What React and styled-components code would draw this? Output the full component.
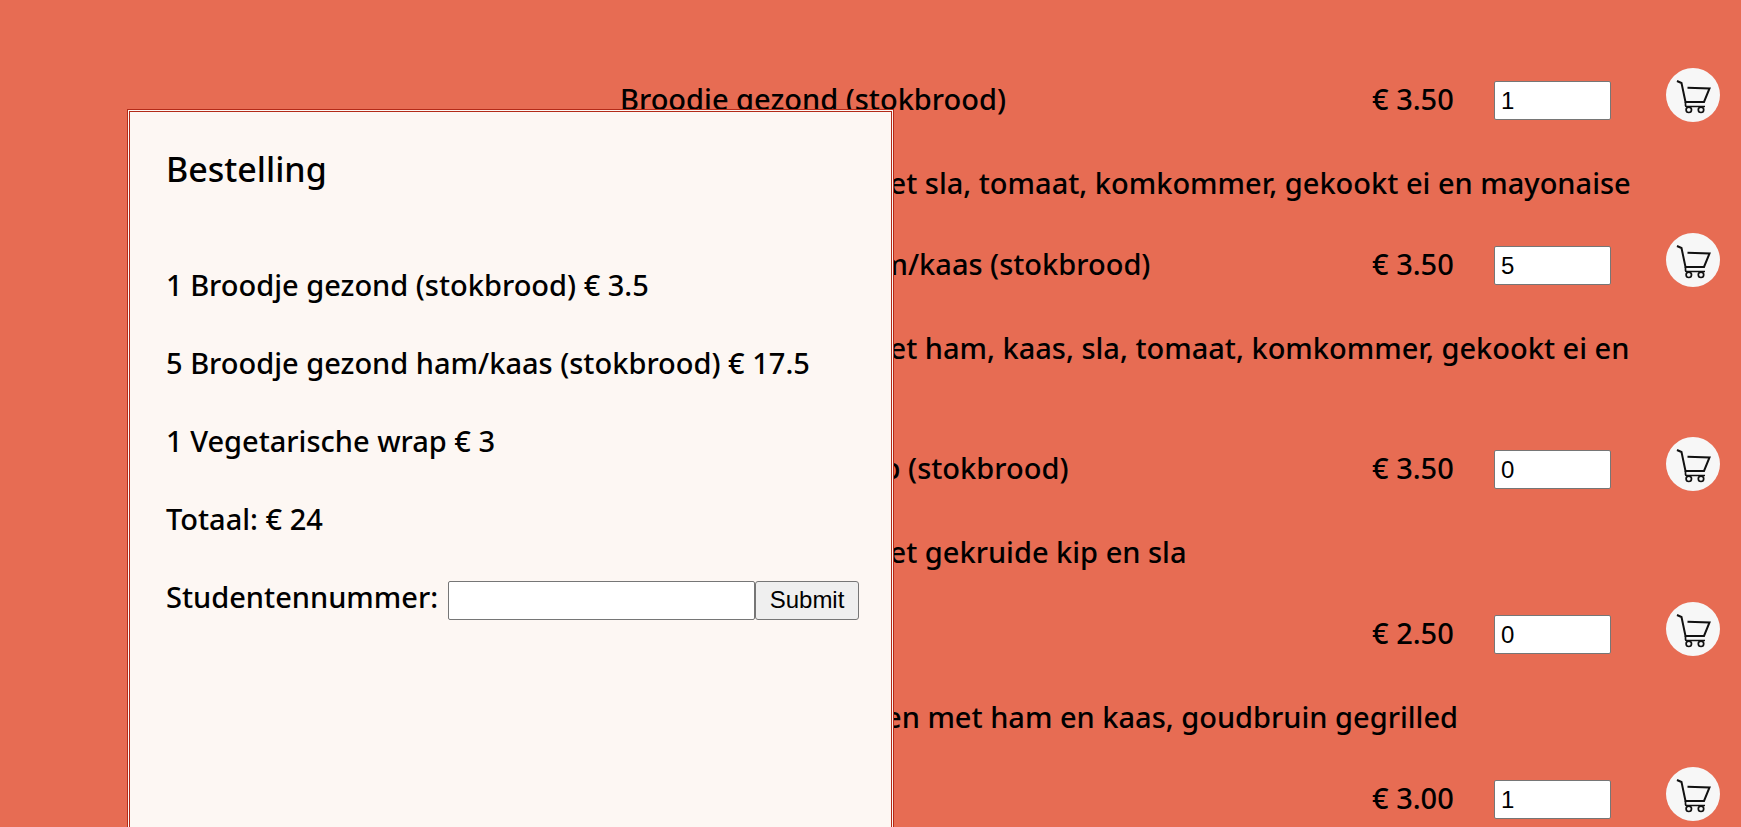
import React from "react";
import styled, { createGlobalStyle } from "styled-components";

const GlobalStyle = createGlobalStyle`
  * { box-sizing: border-box; }
  html { scrollbar-width: none; }
  body {
    margin: 0;
    background: #e76c53;
    color: #000;
    font: 500 29px/38px "Noto Sans", "Open Sans", sans-serif;
  }
`;

const Menu = styled.main`
  display: flex;
  flex-direction: column;
  gap: 31px;
  padding: 68px 21px 0 620px;
`;

const Item = styled.section`
  display: flex;
  flex-direction: column;
  gap: 41px;
`;

const ItemRow = styled.div`
  display: grid;
  grid-template-columns: 1fr 122px 172px 54px;
  align-items: start;
`;

const ItemName = styled.h2`
  margin: 12px 0 0;
  font-size: inherit;
  font-weight: inherit;
  white-space: nowrap;
`;

const Price = styled.span`
  margin-top: 12px;
`;

const Field = styled.input`
  height: 39px;
  padding: 1px 6px;
  border: 1px solid #767676;
  border-radius: 2px;
  background: #fff;
  color: #000;
  font: 24px "Liberation Sans", Arial, sans-serif;
`;

const Quantity = styled(Field)`
  width: 117px;
  margin-top: 13px;
  appearance: textfield;
  &::-webkit-inner-spin-button { display: none; }
`;

const CartButton = styled.button`
  width: 54px;
  height: 54px;
  padding: 0;
  border: 0;
  border-radius: 50%;
  background: #f7f7f7;
  cursor: pointer;
  svg { display: block; }
`;

const Description = styled.p`
  margin: 0 54px 0 0;
  line-height: 39px;
`;

const Dialog = styled.div`
  position: fixed;
  top: 109px;
  bottom: 0;
  left: 127px;
  width: calc(44% + 1px);
  padding: 35px 32px 36px 36px;
  border: 3px double #b32a18;
  border-bottom: 0;
  background: #fdf7f3;
`;

const Title = styled.h1`
  margin: 0 0 75px;
  font-size: 34px;
  line-height: 44px;
  font-weight: 500;
`;

const Line = styled.p`
  margin: 0 0 40px;
  white-space: nowrap;
`;

const Form = styled.form`
  display: flex;
  align-items: baseline;
`;

const StudentInput = styled(Field)`
  flex: 1;
  min-width: 0;
  margin-left: 10px;
`;

const Submit = styled.button`
  width: 104px;
  height: 39px;
  padding: 0;
  border: 1px solid #767676;
  border-radius: 3px;
  background: #efefef;
  color: #000;
  font: 24px "Liberation Sans", Arial, sans-serif;
`;

const CartIcon = () => (
  <svg width="54" height="54" viewBox="0 0 54 54" fill="none" stroke="#111" strokeWidth="1.7" aria-hidden="true">
    <path d="M11 13 15.5 15 19.5 34H38L43.5 20.5 21.5 19.7" strokeWidth="2" />
    <path d="M19.5 34V37.5Q19.5 38.5 21 38.5H39" />
    <circle cx="22.8" cy="41.8" r="2.7" />
    <circle cx="35" cy="41.8" r="2.7" />
  </svg>
);

const items = [
  { name: "Broodje gezond (stokbrood)", price: "3.50", count: 1, text: "Vers stokbroodje met sla, tomaat, komkommer, gekookt ei en mayonaise" },
  { name: "Broodje gezond ham/kaas (stokbrood)", price: "3.50", count: 5, text: "Vers stokbroodje met ham, kaas, sla, tomaat, komkommer, gekookt ei en mayonaise" },
  { name: "Broodje kruidige kip (stokbrood)", price: "3.50", count: 0, text: "Vers stokbroodje met gekruide kip en sla" },
  { name: "Tosti ham/kaas", price: "2.50", count: 0, text: "Bruine boterhammen met ham en kaas, goudbruin gegrilled" },
  { name: "Vegetarische wrap", price: "3.00", count: 1 },
];

const order = [
  "1 Broodje gezond (stokbrood) € 3.5",
  "5 Broodje gezond ham/kaas (stokbrood) € 17.5",
  "1 Vegetarische wrap € 3",
  "Totaal: € 24",
];

export default function App() {
  return (
    <>
      <GlobalStyle />
      <Menu>
        {items.map((item) => (
          <Item key={item.name}>
            <ItemRow>
              <ItemName>{item.name}</ItemName>
              <Price>€ {item.price}</Price>
              <Quantity type="number" min="0" defaultValue={item.count} aria-label={`Aantal ${item.name}`} />
              <CartButton type="button" aria-label={`Bestel ${item.name}`}>
                <CartIcon />
              </CartButton>
            </ItemRow>
            {item.text && <Description>{item.text}</Description>}
          </Item>
        ))}
      </Menu>
      <Dialog role="dialog" aria-labelledby="order-title">
        <Title id="order-title">Bestelling</Title>
        {order.map((line) => (
          <Line key={line}>{line}</Line>
        ))}
        <Form onSubmit={(event) => event.preventDefault()}>
          <label htmlFor="student">Studentennummer:</label>
          <StudentInput id="student" type="text" />
          <Submit type="submit">Submit</Submit>
        </Form>
      </Dialog>
    </>
  );
}
